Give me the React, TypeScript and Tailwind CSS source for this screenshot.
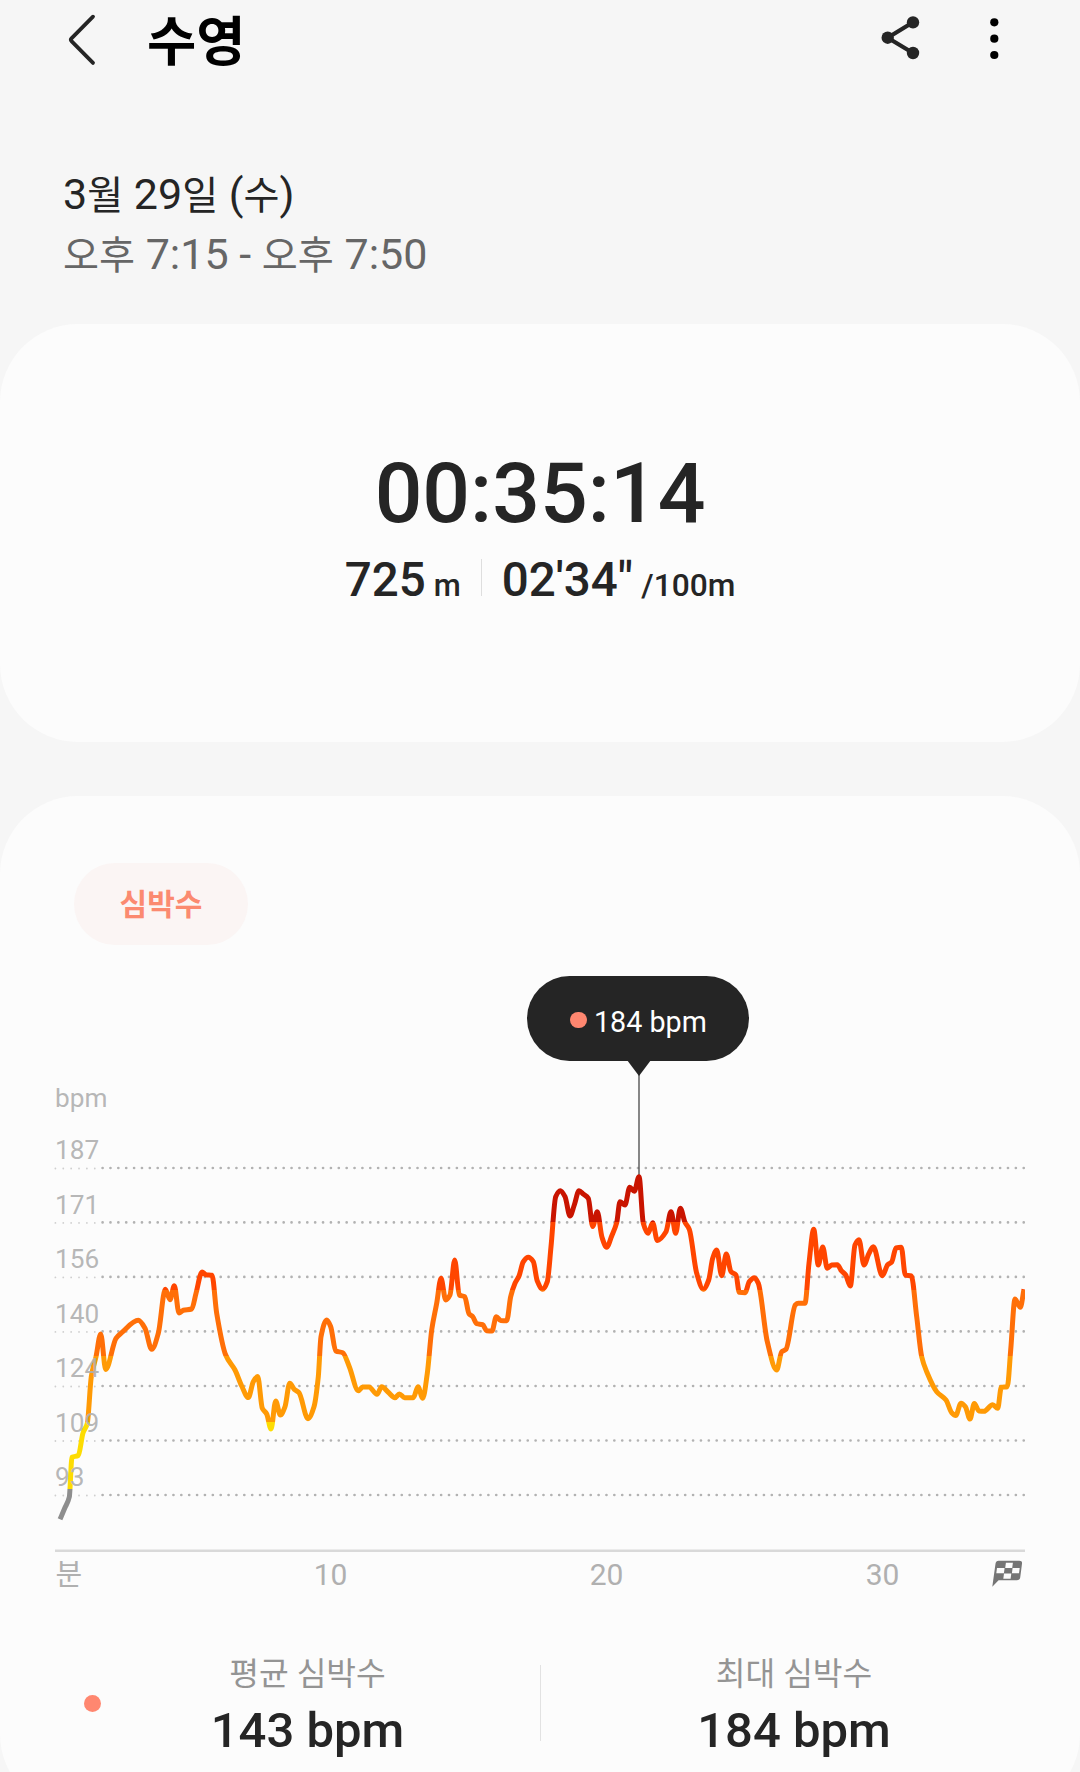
import React from "react";

// Heart-rate trace as [x, y] in the chart's viewBox units.
const trace: [number, number][] = [
  [60, 1519.3], [64.7, 1508.3], [69.3, 1497], [72, 1457.3], [78.3, 1455.5], [83, 1433], [87.3, 1423.3], [91.3, 1376.7],
  [96, 1356.7], [100.7, 1334], [105.7, 1369.5], [116, 1338.3], [121.7, 1332.7], [138.3, 1320.3], [145, 1328.3],
  [151.7, 1349.3], [158.3, 1333.3], [165.3, 1289.3], [170, 1299.7], [174.3, 1285.7], [179, 1313], [183.3, 1310.3],
  [191.7, 1309], [196, 1293.3], [202, 1272], [206, 1274.7], [212, 1275.3], [216.7, 1313.3], [225.7, 1355],
  [235, 1370], [241.7, 1386], [248.3, 1397.5], [253.3, 1381.7], [257.7, 1376.5], [262.3, 1408.3], [266.7, 1414],
  [271, 1429], [275.7, 1401], [280.3, 1415], [285, 1406.7], [289.7, 1383.3], [294.3, 1389.3], [299, 1392.7],
  [308, 1418.7], [314, 1406.7], [318.3, 1376.7], [321, 1336.7], [326.7, 1320], [330.7, 1326.7], [335.7, 1351],
  [342.7, 1352.7], [349.3, 1366.7], [358.3, 1390.7], [362.7, 1387], [369, 1387], [377, 1394.3], [381.7, 1386.7],
  [388.3, 1392.3], [395, 1397.7], [399.3, 1394], [404.7, 1397.7], [413.3, 1397.7], [418, 1386.7], [422.7, 1398.3],
  [427.3, 1373.3], [431.7, 1330], [436.7, 1303.3], [441, 1278.3], [445.7, 1300], [450, 1295], [454.7, 1260],
  [459.3, 1295], [464.7, 1296.7], [469, 1313.7], [472.7, 1316.7], [476.7, 1323.7], [482.7, 1324.7], [486.7, 1330.7],
  [492, 1331], [496.3, 1316.7], [500.7, 1320.5], [506.7, 1320.7], [510.7, 1296.7], [515, 1283.3], [519, 1276],
  [523.3, 1261.7], [528.3, 1257.3], [533.3, 1261.7], [537.3, 1281], [542.7, 1289.3], [547.3, 1281.7], [551, 1246.7],
  [555.7, 1196.7], [560.3, 1190.7], [565, 1196.7], [570, 1216], [574.3, 1205], [579, 1190.7], [583.3, 1194],
  [588.3, 1198.3], [592.7, 1226.5], [597.3, 1211.7], [602, 1237.3], [606.7, 1247.3], [611.7, 1236], [616.7, 1222.7],
  [620, 1201.7], [625, 1205], [629.7, 1187.3], [634.3, 1191.3], [639, 1176.7], [643.3, 1223.3], [648, 1233.3],
  [652.7, 1222.7], [657.3, 1240.5], [666, 1231.7], [671, 1211.7], [675.7, 1233.3], [680.3, 1208.3], [685, 1222.3],
  [689.3, 1229.3], [696.7, 1273.3], [703.3, 1289.3], [708.7, 1280], [712.7, 1258.3], [716.7, 1250], [721.7, 1275.7],
  [726.3, 1254], [731, 1271.7], [736, 1275], [739.3, 1292.3], [745, 1292.7], [749.3, 1281.7], [754.3, 1277.7],
  [758.3, 1283.3], [767.3, 1341.7], [776.7, 1370], [781.7, 1351.7], [786, 1349.3], [795.3, 1305], [798.3, 1303.3],
  [805, 1303.3], [809, 1263.3], [813.7, 1229.3], [818.3, 1265], [822.7, 1247], [827.3, 1268.3], [831.7, 1265],
  [837.3, 1264.7], [841.3, 1270.7], [845.7, 1275], [850.3, 1286], [855, 1245], [859, 1239.7], [864, 1265],
  [868.7, 1254], [873.3, 1246.7], [882.3, 1275.7], [887.7, 1264.7], [891.7, 1262], [896, 1248], [901.3, 1247.3],
  [905.3, 1275], [911.3, 1276], [916.7, 1316.7], [921.7, 1356.7], [926.7, 1371.7], [936.7, 1391.7], [946, 1400],
  [951.7, 1412.7], [955.7, 1415.5], [961, 1403.3], [965.3, 1406.7], [970, 1419], [974.3, 1403.5], [979, 1411],
  [984, 1411.3], [992.7, 1404.7], [997.7, 1408.3], [1001.3, 1387.3], [1007.3, 1386.7], [1010.7, 1350],
  [1015, 1299], [1020.3, 1307.3], [1024, 1289.3],
];

// Monotone cubic interpolation, so peaks stay rounded without overshooting.
function smoothPath(p: [number, number][]) {
  const n = p.length;
  const d = p.slice(1).map((q, i) => (q[1] - p[i][1]) / (q[0] - p[i][0]));
  const m = p.map((_, i) => {
    if (i === 0) return d[0];
    if (i === n - 1) return d[n - 2];
    return d[i - 1] * d[i] <= 0 ? 0 : (2 * d[i - 1] * d[i]) / (d[i - 1] + d[i]);
  });
  let out = `M${p[0][0]} ${p[0][1]}`;
  for (let i = 0; i < n - 1; i++) {
    const h = (p[i + 1][0] - p[i][0]) / 3;
    out += `C${p[i][0] + h} ${p[i][1] + m[i] * h} ${p[i + 1][0] - h} ${p[i + 1][1] - m[i + 1] * h} ${p[i + 1][0]} ${p[i + 1][1]}`;
  }
  return out;
}

const grid = [
  { y: 1168, label: "187" },
  { y: 1222.4, label: "171" },
  { y: 1276.9, label: "156" },
  { y: 1331.4, label: "140" },
  { y: 1386, label: "124" },
  { y: 1440.5, label: "109" },
  { y: 1495, label: "93" },
];

const zones = [
  { from: 1170, to: 1222.3, color: "#c91400" },
  { from: 1222.3, to: 1289.7, color: "#ff4500" },
  { from: 1289.7, to: 1356, color: "#ff6f08" },
  { from: 1356, to: 1421.7, color: "#ff9a05" },
  { from: 1421.7, to: 1489, color: "#fddc02" },
  { from: 1489, to: 1530, color: "#8e8e8e" },
];

const Ko = ({ children }: { children: React.ReactNode }) => (
  <span className="text-[0.91em] leading-[0]">{children}</span>
);

function Header() {
  return (
    <header className="flex h-[76px] items-start">
      <svg className="ml-[64px] h-[76px] w-[40px]" viewBox="64 0 40 76" fill="none">
        <path d="M93 16.7 71.5 38.4Q70.2 39.8 71.5 41.2L93 62.9" stroke="#252525" strokeWidth="3.8" strokeLinecap="round" />
      </svg>
      <h1 className="ml-[43px] text-[53.5px] leading-[86px] font-bold text-black">수영</h1>
      <svg className="ml-auto h-[76px] w-[44px]" viewBox="878 0 44 76">
        <path d="M913 22.3 887.7 37.7 913 53" fill="none" stroke="#252525" strokeWidth="4.2" />
        <g fill="#252525">
          <circle cx="913" cy="22.4" r="6.2" />
          <circle cx="887.7" cy="37.7" r="6.2" />
          <circle cx="913" cy="53" r="6.2" />
        </g>
      </svg>
      <svg className="mr-[76px] ml-[62px] h-[76px] w-[20px]" viewBox="984 0 20 76">
        <circle cx="994.3" cy="22.3" r="4.1" />
        <circle cx="994.3" cy="38.7" r="4.1" />
        <circle cx="994.3" cy="55" r="4.1" />
      </svg>
    </header>
  );
}

function Summary() {
  return (
    <section className="mt-[53px] flex h-[418px] flex-col items-center rounded-[78px] bg-[#fcfcfc] pt-[127.5px] font-medium">
      <div className="text-[84px] leading-[84px]">00:35:14</div>
      <div className="mt-[20.5px] flex items-baseline text-[47.5px] leading-[48px]">
        <span>725</span>
        <span className="ml-[8px] text-[31px]">m</span>
        <span className="mx-[20px] h-[37px] w-px bg-[#dedede]" />
        <span>02'34"</span>
        <span className="ml-[8.5px] text-[31.7px]">/100m</span>
      </div>
    </section>
  );
}

function Chart() {
  return (
    <div className="relative mt-px h-[656px]">
      <svg className="h-[656px] w-[1080px]" viewBox="0 946 1080 656">
        <defs>
          <linearGradient id="zones" gradientUnits="userSpaceOnUse" x1="0" y1="1170" x2="0" y2="1530">
            {zones.flatMap((z) => [
              <stop key={z.color + "a"} offset={(z.from - 1170) / 360} stopColor={z.color} />,
              <stop key={z.color + "b"} offset={(z.to - 1170) / 360} stopColor={z.color} />,
            ])}
          </linearGradient>
          <clipPath id="plot">
            <rect x="50" y="1100" width="975" height="440" />
          </clipPath>
        </defs>
        {grid.map((g) => (
          <g key={g.y} strokeLinecap="round" strokeDasharray="0 7.873">
            <path d={`M55.4 ${g.y + 0.5}H96`} stroke="#cfcfcf" strokeWidth="1.8" />
            <path d={`M102.6 ${g.y}H1025`} stroke="#b2b2b2" strokeWidth="2.7" />
          </g>
        ))}
        <path d="M55 1550.7H1025" stroke="#d9d9d9" strokeWidth="2.6" />
        <path d="M639 1070V1178" stroke="#555" strokeWidth="1.4" />
        <path d={smoothPath(trace)} clipPath="url(#plot)" fill="none" stroke="url(#zones)" strokeWidth="5" strokeLinejoin="round" />
        <g fill="#b0b0b0" fillOpacity="0.92" fontSize="26.2">
          <text x="55" y="1107.4">bpm</text>
          {grid.map((g) => (
            <text key={g.label} x="55" y={Math.round(g.y - 8.9)}>{g.label}</text>
          ))}
        </g>
        <g fill="#b0b0b0" fontSize="30">
          <text x="55.5" y="1584.6" fontSize="29">분</text>
          <text x="330.5" y="1585.3" textAnchor="middle">10</text>
          <text x="606.5" y="1585.3" textAnchor="middle">20</text>
          <text x="882.5" y="1585.3" textAnchor="middle">30</text>
        </g>
        <path d="M998.6 1560.7h20.6q3.2 0 2.8 3l-1.8 13.8q-.4 2.8-3.4 2.8h-18.2l-6.3 6.4 3.2-23q.4-3 3.1-3z" fill="#757575" />
        <path
          d="M1005.9 1562.8h7l-.7 5.2h-7zM997 1568h7.6l-.7 5.3h-7.6zM1012.6 1568h7.1l-.7 5.3h-7.1zM1004 1573.4h7.3l-.7 5.4h-7.3z"
          fill="#fcfcfc"
        />
      </svg>
      <div className="absolute top-[30px] left-[527px] flex h-[84.5px] w-[222px] items-center rounded-full bg-[#252525] pl-[43px] text-[28.7px] text-white">
        <span className="mt-[3px] size-[16.5px] rounded-full bg-[#ff8770]" />
        <span className="mt-[9px] ml-[7.5px]">184 bpm</span>
        <svg className="absolute top-[84px] left-[100px] h-[16px] w-[24px]" viewBox="0 0 24 16">
          <path d="M0 0H24L12 16Z" fill="#252525" />
        </svg>
      </div>
    </div>
  );
}

function Stat({ width, label, value }: { width: string; label: string; value: string }) {
  return (
    <div className={`flex flex-none flex-col items-center ${width}`}>
      <div className="text-[32.3px] leading-[44px] text-[#949494]">{label}</div>
      <div className="mt-[5px] text-[49px] leading-[60px] font-medium">{value}</div>
    </div>
  );
}

export default function App() {
  return (
    <main className="h-[1772px] w-[1080px] overflow-hidden bg-[#f6f6f6] font-['Roboto','Noto_Sans_CJK_KR',sans-serif] text-[#252525]">
      <Header />
      <div className="mt-[88px] ml-[63px] h-[107px] text-[43px] leading-[60px]">
        <div>3<Ko>월</Ko> 29<Ko>일</Ko> (<Ko>수</Ko>)</div>
        <div className="text-[#666]"><Ko>오후</Ko> 7:15 - <Ko>오후</Ko> 7:50</div>
      </div>
      <Summary />
      <section className="mt-[54px] h-[1016px] rounded-[78px] bg-[#fcfcfc] pt-[67px]">
        <div className="ml-[74px] flex h-[82px] w-[174px] items-center justify-center rounded-full bg-[#fbf5f4] text-[30px] font-bold text-[#fb8a70]">
          심박수
        </div>
        <Chart />
        <div className="mt-[50px] flex pl-[84px]">
          <span className="mt-[43px] -mr-[25px] size-[16.5px] flex-none rounded-full bg-[#ff8770]" />
          <Stat width="w-[464px]" label="평균 심박수" value="143 bpm" />
          <span className="mt-[13px] h-[76px] w-px bg-[#e2e2e2]" />
          <Stat width="w-[507px]" label="최대 심박수" value="184 bpm" />
        </div>
      </section>
    </main>
  );
}
